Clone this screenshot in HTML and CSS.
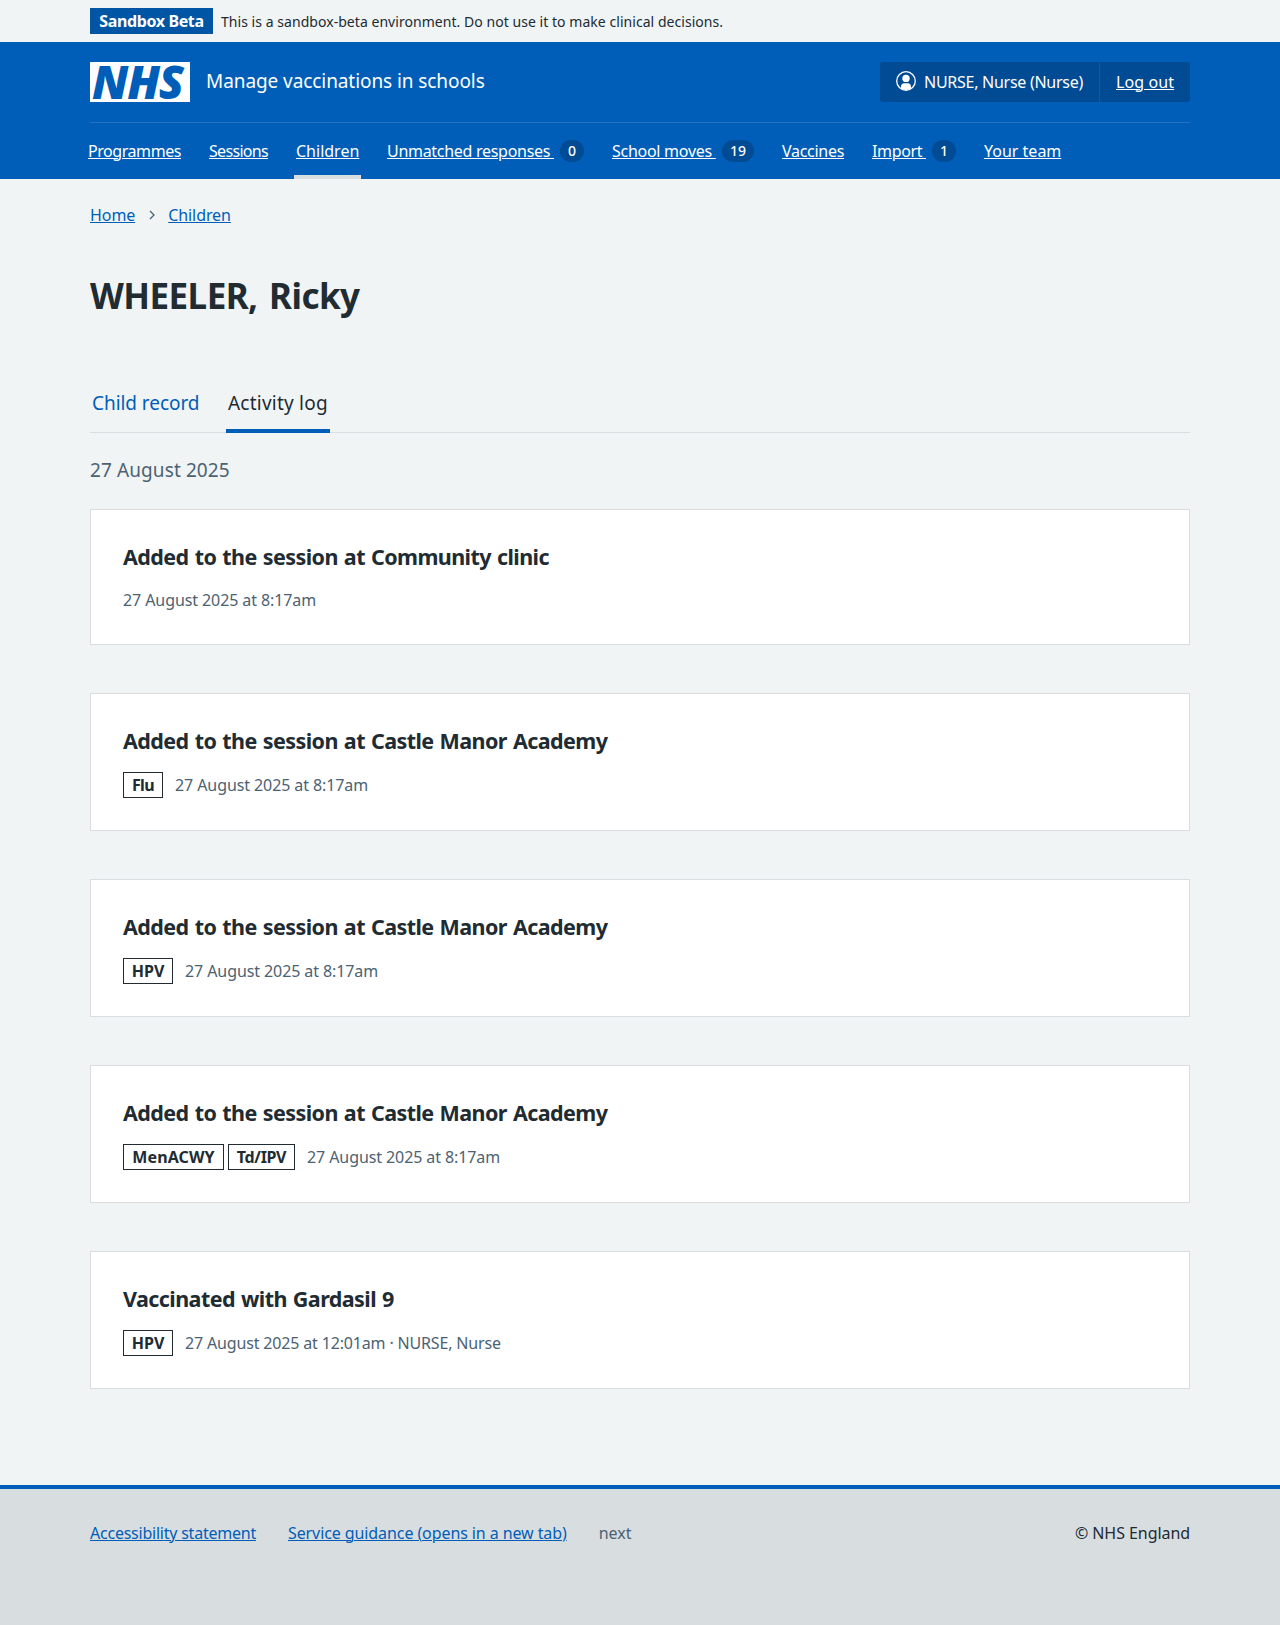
FILE: index.html
```html
<!DOCTYPE html>
<html lang="en">
<head>
<meta charset="utf-8">
<title>WHEELER, Ricky</title>
<link rel="stylesheet" href="styles.css">
</head>
<body>
<div class="env"><div class="container env-row"><strong class="env-tag">Sandbox Beta</strong><span class="env-text">This is a sandbox-beta environment. Do not use it to make clinical decisions.</span></div></div>
<header class="header">
  <div class="container">
    <div class="header-top">
      <a class="brand" href="#"><span class="logo">NHS</span><span class="service">Manage vaccinations in schools</span></a>
      <div class="account">
        <div class="account-item user"><svg class="user-icon" viewBox="0 0 20 20" width="20" height="20"><circle cx="10" cy="10" r="9.3" fill="none" stroke="#fff" stroke-width="1.3"/><circle cx="10" cy="7.4" r="3.7" fill="#fff"/><path d="M5 17.2v-1.6c0-2 1.3-3.3 3.1-3.3h3.8c1.8 0 3.1 1.3 3.1 3.3v1.6q-5 3.4-10 0z" fill="#fff"/></svg><span>NURSE, Nurse (Nurse)</span></div>
        <div class="account-item logout"><a href="#">Log out</a></div>
      </div>
    </div>
    <nav class="nav">
      <a class="w-programmes" href="#"><span>Programmes</span></a>
      <a class="w-sessions" href="#"><span>Sessions</span></a>
      <a class="w-children current" href="#"><span>Children</span></a>
      <a class="w-unmatched" href="#"><span>Unmatched responses&nbsp;</span><b class="count">0</b></a>
      <a class="w-moves" href="#"><span>School moves&nbsp;</span><b class="count">19</b></a>
      <a class="w-vaccines" href="#"><span>Vaccines</span></a>
      <a class="w-import" href="#"><span>Import&nbsp;</span><b class="count">1</b></a>
      <a class="w-team" href="#"><span>Your team</span></a>
    </nav>
  </div>
</header>
<main class="container main">
  <nav class="breadcrumb"><a href="#">Home</a><svg class="chevron" viewBox="0 0 6 10" width="6" height="10"><path d="M1 1l4 4-4 4" fill="none" stroke="#4c6272" stroke-width="1.3"/></svg><a href="#">Children</a></nav>
  <h1>WHEELER, Ricky</h1>
  <nav class="tabs"><a href="#">Child record</a><a class="active" href="#">Activity log</a></nav>
  <h2 class="day">27 August 2025</h2>
  <article class="card untagged"><h3>Added to the session at Community clinic</h3><p class="meta">27 August 2025 at 8:17am</p></article>
  <article class="card"><h3>Added to the session at Castle Manor Academy</h3><p class="meta tagged"><strong class="tag flu">Flu</strong><span>27 August 2025 at 8:17am</span></p></article>
  <article class="card"><h3>Added to the session at Castle Manor Academy</h3><p class="meta tagged"><strong class="tag hpv">HPV</strong><span>27 August 2025 at 8:17am</span></p></article>
  <article class="card"><h3>Added to the session at Castle Manor Academy</h3><p class="meta tagged"><strong class="tag men">MenACWY</strong><strong class="tag td">Td/IPV</strong><span>27 August 2025 at 8:17am</span></p></article>
  <article class="card"><h3>Vaccinated with Gardasil 9</h3><p class="meta tagged"><strong class="tag hpv">HPV</strong><span class="long">27 August 2025 at 12:01am · NURSE, Nurse</span></p></article>
</main>
<footer class="footer"><div class="container footer-row"><a class="f-access" href="#">Accessibility statement</a><a class="f-guide" href="#">Service guidance (opens in a new tab)</a><span class="next">next</span><span class="copy">© NHS England</span></div></footer>
</body>
</html>
```
FILE: styles.css
```css
* { box-sizing: border-box; }
body { margin: 0; background: #f0f4f5; color: #212b32; font: 16px/24px "Noto Sans", sans-serif; }
a { color: #005eb8; text-decoration: underline; text-decoration-thickness: 1px; text-underline-offset: 1px; }
.container { width: 1100px; margin: 0 auto; }

.env { height: 42px; padding-top: 8px; }
.env-row { display: flex; gap: 8px; align-items: flex-start; }
.env-tag { width: 123px; height: 26px; background: #0055a5; color: #fff; line-height: 26px; letter-spacing: -.38px; text-align: center; white-space: nowrap; }
.env-text { font-size: 14px; line-height: 28px; letter-spacing: .045px; white-space: nowrap; }

.header { height: 137px; background: #005eb8; color: #fff; }
.header a { color: #fff; }
.header-top { display: flex; justify-content: space-between; height: 81px; padding-top: 20px; border-bottom: 1px solid #2673bf; }
.brand { display: flex; gap: 16px; text-decoration: none; }
.header .logo { width: 100px; height: 40px; background: #fff; color: #005eb8; font: italic 800 46px/39px "Open Sans", sans-serif; letter-spacing: -1.2px; text-indent: 2px; white-space: nowrap; }
.service { font-size: 19px; line-height: 39px; letter-spacing: -.08px; }
.account { display: flex; width: 310px; height: 40px; background: #004b93; border-radius: 3px; white-space: nowrap; }
.account-item { display: flex; align-items: center; padding: 0 16px; }
.user { width: 220px; gap: 8px; border-right: 1px solid #005eb8; letter-spacing: -.27px; }
.logout { letter-spacing: .1px; }
.user-icon { flex: none; margin-top: -3px; }
.nav { display: flex; gap: 24px; height: 56px; margin-left: -4px; white-space: nowrap; }
.nav a { display: flex; align-items: center; padding: 0 2px; text-decoration: none; border-bottom: 4px solid transparent; border-top: 4px solid transparent; }
.nav a span { text-decoration: underline; text-decoration-thickness: 1px; text-underline-offset: 1px; }
.nav .current { border-bottom-color: #d8dde0; }
.count { height: 22px; min-width: 24px; margin-left: auto; padding: 0 8px; border-radius: 12px; background: #004b93; font-size: 14px; font-weight: 500; line-height: 22px; letter-spacing: 0; text-align: center; }
.w-programmes { width: 97px; letter-spacing: -.44px; }
.w-sessions { width: 63px; letter-spacing: -.69px; }
.w-children { width: 67px; }
.w-unmatched { width: 201px; letter-spacing: -.29px; }
.w-moves { width: 146px; letter-spacing: -.27px; }
.w-vaccines { width: 66px; letter-spacing: -.29px; }
.w-import { width: 88px; letter-spacing: -.35px; }
.w-team { width: 81px; }

.main { height: 1306px; padding-top: 24px; }
.breadcrumb { display: flex; align-items: center; height: 24px; letter-spacing: -.08px; }
.chevron { margin: 0 13px 0 14px; }
h1 { margin: 45px 0 0; font-size: 35px; line-height: 48px; letter-spacing: -.55px; word-spacing: 3px; }
.tabs { display: flex; gap: 24px; height: 53px; margin-top: 60px; border-bottom: 1px solid #d8dde0; }
.tabs a { width: 108px; margin-right: 4px; height: 53px; padding: 11px 2px 0; text-decoration: none; font-size: 19px; letter-spacing: -.06px; white-space: nowrap; border-bottom: 4px solid transparent; }
.tabs .active { width: 104px; letter-spacing: .22px; color: #212b32; border-bottom-color: #005eb8; }
.day { margin: 23px 0 25px; color: #4c6272; font-size: 19px; font-weight: 400; line-height: 28px; letter-spacing: .1px; }
.card { height: 138px; margin-bottom: 48px; padding: 32px; background: #fff; border: 1px solid #d8dde0; }
.untagged { height: 136px; }
.card h3 { margin: 0 0 16px; font-size: 21.5px; line-height: 30px; letter-spacing: -.57px; word-spacing: 1px; }
.meta { margin: 0; color: #4c6272; letter-spacing: -.09px; }
.long { letter-spacing: -.16px; }
.tagged { display: flex; line-height: 26px; }
.tag { height: 26px; margin-right: 4px; border: 1px solid #212b32; color: #212b32; line-height: 24px; letter-spacing: 0; text-align: center; }
.tag + span { margin-left: 8px; }
.flu { width: 40px; letter-spacing: -.6px; }
.hpv { width: 50px; }
.men { width: 101px; letter-spacing: .1px; }
.td { width: 67px; letter-spacing: -.35px; }

.footer { height: 140px; border-top: 4px solid #005eb8; background: #d8dde0; }
.footer-row { display: flex; gap: 32px; padding-top: 32px; }
.f-access { letter-spacing: -.23px; }
.f-guide { letter-spacing: -.09px; }
.next { color: #4c6272; }
.copy { margin-left: auto; letter-spacing: -.06px; }
```
